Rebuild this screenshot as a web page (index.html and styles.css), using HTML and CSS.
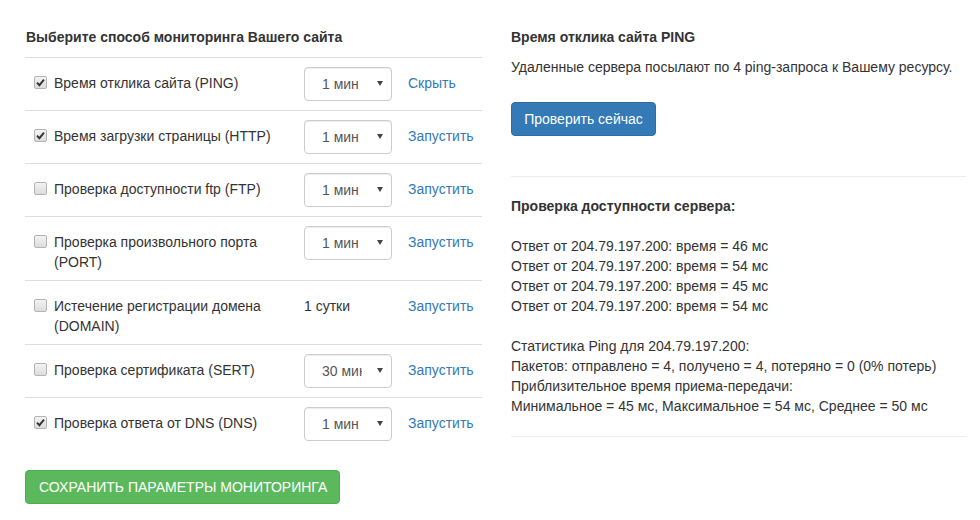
FILE: index.html
```html
<!DOCTYPE html>
<html lang="ru">
<head>
<meta charset="utf-8">
<title>Мониторинг</title>
<link rel="stylesheet" href="styles.css">
</head>
<body>
<div class="page">
  <section class="left">
    <h2 class="title">Выберите способ мониторинга Вашего сайта</h2>
    <div class="table">
      <div class="row">
        <div class="cell label"><span class="cb checked"><svg viewBox="0 0 13 13" width="13" height="13"><path d="M3 6.6 L5.4 9.2 L10 3.6" fill="none" stroke="#333" stroke-width="1.9"/></svg></span><span>Время отклика сайта (PING)</span></div>
        <div class="cell"><div class="select"><span class="val">1 мин</span><span class="arrow"></span></div></div>
        <div class="cell action"><a href="#">Скрыть</a></div>
      </div>
      <div class="row">
        <div class="cell label"><span class="cb checked"><svg viewBox="0 0 13 13" width="13" height="13"><path d="M3 6.6 L5.4 9.2 L10 3.6" fill="none" stroke="#333" stroke-width="1.9"/></svg></span><span>Время загрузки страницы (HTTP)</span></div>
        <div class="cell"><div class="select"><span class="val">1 мин</span><span class="arrow"></span></div></div>
        <div class="cell action"><a href="#">Запустить</a></div>
      </div>
      <div class="row">
        <div class="cell label"><span class="cb"></span><span>Проверка доступности ftp (FTP)</span></div>
        <div class="cell"><div class="select"><span class="val">1 мин</span><span class="arrow"></span></div></div>
        <div class="cell action"><a href="#">Запустить</a></div>
      </div>
      <div class="row">
        <div class="cell label"><span class="cb"></span><span>Проверка произвольного порта (PORT)</span></div>
        <div class="cell"><div class="select"><span class="val">1 мин</span><span class="arrow"></span></div></div>
        <div class="cell action"><a href="#">Запустить</a></div>
      </div>
      <div class="row">
        <div class="cell label"><span class="cb"></span><span>Истечение регистрации домена (DOMAIN)</span></div>
        <div class="cell action">1 сутки</div>
        <div class="cell action"><a href="#">Запустить</a></div>
      </div>
      <div class="row">
        <div class="cell label"><span class="cb"></span><span>Проверка сертификата (SERT)</span></div>
        <div class="cell"><div class="select"><span class="val">30 мин</span><span class="arrow"></span></div></div>
        <div class="cell action"><a href="#">Запустить</a></div>
      </div>
      <div class="row">
        <div class="cell label"><span class="cb checked"><svg viewBox="0 0 13 13" width="13" height="13"><path d="M3 6.6 L5.4 9.2 L10 3.6" fill="none" stroke="#333" stroke-width="1.9"/></svg></span><span>Проверка ответа от DNS (DNS)</span></div>
        <div class="cell"><div class="select"><span class="val">1 мин</span><span class="arrow"></span></div></div>
        <div class="cell action"><a href="#">Запустить</a></div>
      </div>
    </div>
    <button class="btn btn-save" type="button">СОХРАНИТЬ ПАРАМЕТРЫ МОНИТОРИНГА</button>
  </section>
  <section class="right">
    <h2 class="title">Время отклика сайта PING</h2>
    <p class="desc">Удаленные сервера посылают по 4 ping-запроса к Вашему ресурсу.</p>
    <button class="btn btn-primary" type="button">Проверить сейчас</button>
    <hr class="sep sep-top">
    <h2 class="title">Проверка доступности сервера:</h2>
    <div class="result">
      <div>Ответ от 204.79.197.200: время = 46 мс</div>
      <div>Ответ от 204.79.197.200: время = 54 мс</div>
      <div>Ответ от 204.79.197.200: время = 45 мс</div>
      <div>Ответ от 204.79.197.200: время = 54 мс</div>
    </div>
    <div class="result">
      <div>Статистика Ping для 204.79.197.200:</div>
      <div>Пакетов: отправлено = 4, получено = 4, потеряно = 0 (0% потерь)</div>
      <div>Приблизительное время приема-передачи:</div>
      <div>Минимальное = 45 мс, Максимальное = 54 мс, Среднее = 50 мс</div>
    </div>
    <hr class="sep">
  </section>
</div>
</body>
</html>
```

FILE: styles.css
```css
* { box-sizing: border-box; }
html, body { margin: 0; padding: 0; background: #fff; }
body {
  font-family: "Liberation Sans", Arial, "Helvetica Neue", sans-serif;
  font-size: 14px;
  line-height: 20px;
  color: #333;
}
.page {
  display: flex;
  gap: 29px;
  padding: 27px 0 0 25px;
}
.left { width: 457px; flex: none; }
.right { width: 455px; flex: none; }
.title {
  margin: 0 0 10px;
  font-size: 14px;
  line-height: 20px;
  font-weight: bold;
  color: #333;
}
.left .title { padding-left: 1px; }
.table { margin-bottom: 20px; }
.row {
  display: grid;
  grid-template-columns: 270px 104px 1fr;
  border-top: 1px solid #ddd;
}
.cell { padding: 9px 9px 8px; }
.label {
  display: flex;
  align-items: flex-start;
  gap: 7px;
  padding-top: 15px;
}
.action { padding-top: 15px; }
.cb {
  flex: none;
  width: 13px;
  height: 13px;
  margin-top: 3px;
  border: 1px solid #b3b3b3;
  border-radius: 2px;
  background: linear-gradient(#f3f3f3, #dcdcdc);
  position: relative;
}
.cb svg { position: absolute; left: -1px; top: -1px; }
.select {
  display: flex;
  align-items: center;
  width: 88px;
  height: 34px;
  margin-bottom: 1px;
  padding: 0 8px 0 17px;
  border: 1px solid #ccc;
  border-radius: 4px;
  box-shadow: inset 0 1px 1px rgba(0,0,0,.075);
  color: #555;
  background: #fff;
}
.val {
  width: 40px;
  overflow: hidden;
  white-space: nowrap;
}
.arrow {
  margin-left: auto;
  margin-top: -2px;
  width: 0;
  height: 0;
  border-left: 3px solid transparent;
  border-right: 3px solid transparent;
  border-top: 5px solid #444;
}
a { color: #337ab7; text-decoration: none; }
.btn {
  display: inline-block;
  height: 34px;
  padding: 6px 12px;
  font-family: inherit;
  font-size: 14px;
  line-height: 20px;
  border-radius: 4px;
  color: #fff;
  cursor: pointer;
  white-space: nowrap;
}
.btn-save {
  background: #5cb85c;
  border: 1px solid #4cae4c;
  padding: 6px 12px 6px 13px;
}
.btn-primary {
  background: #337ab7;
  border: 1px solid #2e6da4;
  width: 145px;
}
.desc { margin: 0 0 25px; }
.sep {
  margin: 0;
  border: 0;
  border-top: 1px solid #eee;
  height: 0;
}
.sep-top { margin: 40px 0 19px; }
.result { margin-top: 20px; }
.result + .sep { margin-top: 20px; }
```
